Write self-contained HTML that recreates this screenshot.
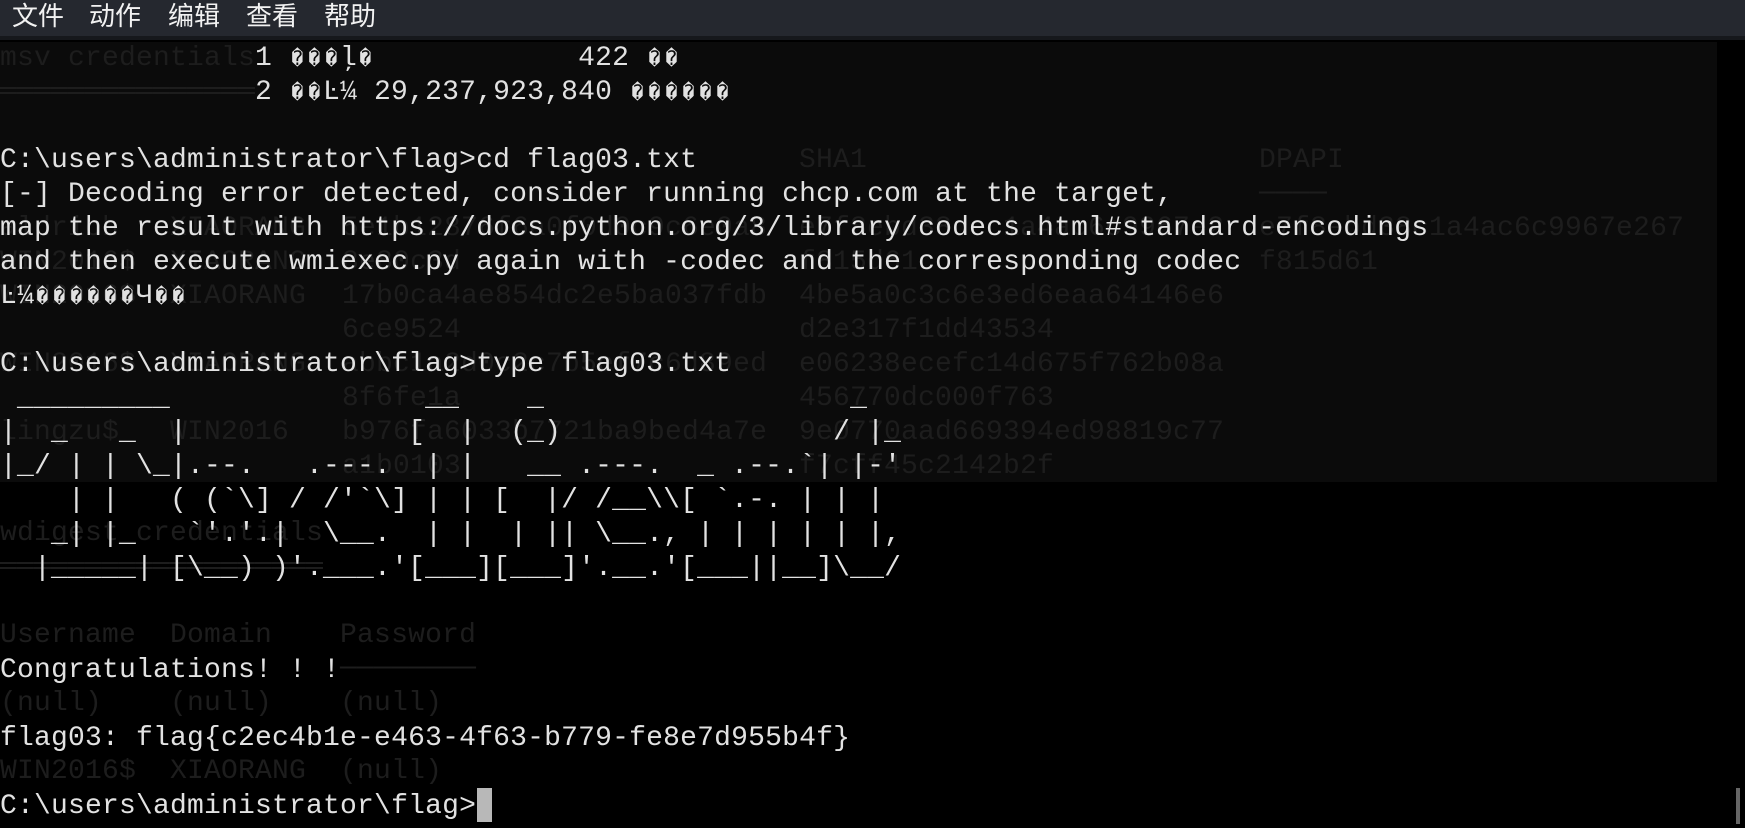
<!DOCTYPE html>
<html><head><meta charset="utf-8"><style>
html,body{margin:0;padding:0;background:#000;width:1745px;height:828px;overflow:hidden;}
#menu{position:absolute;left:0;top:0;width:1745px;height:36px;background:#25282f;color:#f2f2f2;font:26px "Liberation Sans","Noto Sans CJK SC",sans-serif;line-height:32px;}
#menu span{position:absolute;top:0}
#sep{position:absolute;left:0;top:36px;width:1745px;height:4px;background:#16181c}
#panel{position:absolute;left:0;top:42px;width:1717px;height:440px;background:#0b0b0b}
.t,.g{position:absolute;margin:0;font-family:"Liberation Mono","Noto Sans CJK SC",monospace;font-size:28px;letter-spacing:0.2px;line-height:34px;}
.g{white-space:pre;color:#1d1d1d;}
.t{left:0;color:#e2e2e2;white-space:normal;}
.t div{height:34px;overflow:visible;white-space:pre}
.r{font-size:20px;letter-spacing:0;display:inline-block;width:17px;text-align:center;line-height:20px}
#cur{position:absolute;left:477px;top:788px;width:15px;height:34px;background:#b8b8b8}
#sb{position:absolute;left:1736px;top:788px;width:4px;height:36px;background:#666}
</style></head><body>
<div id="menu"><span style="left:12px">文件</span><span style="left:89px">动作</span><span style="left:168px">编辑</span><span style="left:246px">查看</span><span style="left:324px">帮助</span></div>
<div id="sep"></div>
<div id="panel"></div>
<pre class="g" style="left:0;top:42px">msv credentials
═══════════════</pre>
<pre class="g" style="left:799px;top:144px">SHA1</pre>
<pre class="g" style="left:1259px;top:144px">DPAPI
────</pre>
<pre class="g" style="left:0;top:212px">aldrich   XIAORANG
WIN2016$  XIAORANG
WIN2016$  XIAORANG

WIN2016$  XIAORANG

lingzu$   WIN2016</pre>
<pre class="g" style="left:342px;top:212px">5e1b12876f6a0f0d0c9c6e0a8
8e80c3d
17b0ca4ae854dc2e5ba037fdb
6ce9524
abbc1a2d0c2c7b5ef7c6d89ed
8f6fe1a
b976fa6033b7721ba9bed4a7e
a1b0103</pre>
<pre class="g" style="left:799px;top:212px">e7f8ebd38cec1a4ac6c9967e2
f815d61
4be5a0c3c6e3ed6eaa64146e6
d2e317f1dd43534
e06238ecefc14d675f762b08a
456770dc000f763
9e0770aad669394ed98819c77
f7cff45c2142b2f</pre>
<pre class="g" style="left:1259px;top:212px">e7f8ebd38c1a4ac6c9967e267
f815d61</pre>
<pre class="g" style="left:0;top:517px">wdigest_credentials
═══════════════════

Username  Domain    Password
                    ────────
(null)    (null)    (null)

WIN2016$  XIAORANG  (null)</pre>
<div class="t" style="top:42px"><div>               1 <span class="r">�</span><span class="r">�</span><span class="r">�</span>ļ<span class="r">�</span>            422 <span class="r">�</span><span class="r">�</span></div><div>               2 <span class="r">�</span><span class="r">�</span>Ŀ¼ 29,237,923,840 <span class="r">�</span><span class="r">�</span><span class="r">�</span><span class="r">�</span><span class="r">�</span><span class="r">�</span></div><div> </div><div>C:\users\administrator\flag&gt;cd flag03.txt</div><div>[-] Decoding error detected, consider running chcp.com at the target,</div><div>map the result with https://docs.python.org/3/library/codecs.html#standard-encodings</div><div>and then execute wmiexec.py again with -codec and the corresponding codec</div><div>Ŀ¼<span class="r">�</span><span class="r">�</span><span class="r">�</span><span class="r">�</span><span class="r">�</span><span class="r">�</span>Ч<span class="r">�</span><span class="r">�</span></div><div> </div><div>C:\users\administrator\flag&gt;type flag03.txt</div><div> _________               __    _                  _</div><div>|  _   _  |             [  |  (_)                / |_</div><div>|_/ | | \_|.--.   .---.  | |   __ .---.  _ .--.`| |-'</div><div>    | |   ( (`\] / /'`\] | | [  |/ /__\\[ `.-. | | |</div><div>   _| |_   `'.'.|  \__.  | |  | || \__., | | | | | |,</div><div>  |_____| [\__) )'.___.'[___][___]'.__.'[___||__]\__/</div><div> </div><div> </div><div>Congratulations! ! !</div><div> </div><div>flag03: flag{c2ec4b1e-e463-4f63-b779-fe8e7d955b4f}</div><div> </div><div>C:\users\administrator\flag&gt;</div></div>
<div id="cur"></div>
<div id="sb"></div>
</body></html>
